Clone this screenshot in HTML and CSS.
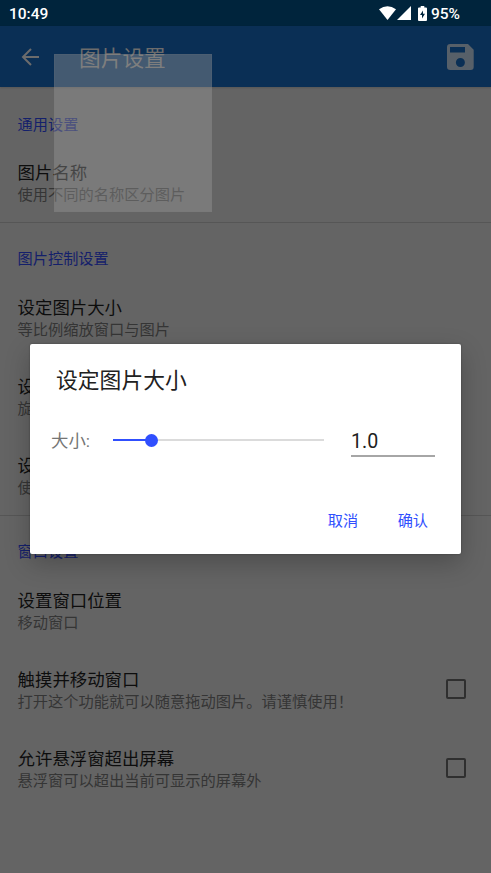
FILE: index.html
```html
<!DOCTYPE html>
<html lang="zh-CN">
<head>
<meta charset="utf-8">
<title>图片设置</title>
<link rel="stylesheet" href="styles.css">
</head>
<body>
<header class="status">
  <span>10:49</span>
  <div class="status-icons">
    <svg width="17" height="15" viewBox="0 0 17 15"><path d="M0 3.3Q8.5-2.7 17 3.3L8.5 14Z"/></svg>
    <svg width="14" height="14" viewBox="0 0 14 14"><path d="M14 0V14H0Z"/></svg>
    <svg class="battery" width="9" height="15" viewBox="0 0 9 15"><path fill-rule="evenodd" d="M2.7 0H6.3V1.5H8Q9 1.5 9 2.5V14Q9 15 8 15H1Q0 15 0 14V2.5Q0 1.5 1 1.5H2.7ZM5 4.5L2 9H4V12.5L7 7.8H5Z"/></svg>
    <span>95%</span>
  </div>
</header>
<nav class="bar">
  <svg class="back" width="18" height="18" viewBox="0 0 18 18"><path d="M18 9H2M10 1L2 9L10 17"/></svg>
  <h1>图片设置</h1>
  <svg class="save" width="28" height="28" viewBox="0 0 28 28"><path fill-rule="evenodd" d="M4.2 1H22L27.7 6.7V24Q27.7 27 24.7 27H4.2Q1 27 1 24V4Q1 1 4.2 1ZM4 4V9.6H19V4ZM14.4 15A4.5 4.5 0 1 0 14.4 24A4.5 4.5 0 1 0 14.4 15Z"/></svg>
</nav>
<main>
  <section>
    <h2>通用设置</h2>
    <div class="row"><div><h3>图片名称</h3><p>使用不同的名称区分图片</p></div></div>
  </section>
  <section>
    <h2>图片控制设置</h2>
    <div class="row"><div><h3>设定图片大小</h3><p>等比例缩放窗口与图片</p></div></div>
    <div class="row"><div><h3>设定</h3><p>旋转</p></div></div>
    <div class="row"><div><h3>设定</h3><p>使用</p></div></div>
  </section>
  <section>
    <h2>窗口设置</h2>
    <div class="row"><div><h3>设置窗口位置</h3><p>移动窗口</p></div></div>
    <div class="row"><div><h3>触摸并移动窗口</h3><p>打开这个功能就可以随意拖动图片。请谨慎使用！</p></div><i class="check"></i></div>
    <div class="row"><div><h3>允许悬浮窗超出屏幕</h3><p>悬浮窗可以超出当前可显示的屏幕外</p></div><i class="check"></i></div>
  </section>
</main>
<div class="floating"></div>
<div class="dialog">
  <h2 class="dialog-title">设定图片大小</h2>
  <div class="control">
    <span class="label">大小:</span>
    <div class="slider"><div class="fill"></div><div class="thumb"></div></div>
    <div class="value">1.0</div>
  </div>
  <div class="actions"><span>取消</span><span>确认</span></div>
</div>
</body>
</html>
```
FILE: styles.css
```css
* { box-sizing: border-box; }
body {
  margin: 0;
  width: 491px;
  height: 873px;
  overflow: hidden;
  position: relative;
  background: #646464;
  font-family: Roboto, "Noto Sans CJK SC", sans-serif;
  font-weight: 400;
}
h1, h2, h3, p { margin: 0; font-weight: 400; white-space: nowrap; }
svg { display: block; }
.status {
  height: 26px;
  padding: 2px 31px 0 9px;
  display: flex;
  align-items: center;
  justify-content: space-between;
  background: #00243c;
  color: #fff;
  font-size: 15.5px;
  font-weight: 500;
}
.status-icons { display: flex; align-items: center; gap: 1px; }
.status-icons svg { fill: #fff; margin-top: -2px; }
.status-icons .battery { margin-left: 6px; margin-right: 3px; }
.bar {
  height: 61px;
  padding: 0 17px 0 21px;
  display: flex;
  align-items: center;
  background: #0a2f55;
  box-shadow: 0 1px 2px rgba(0, 0, 0, .15);
}
.back { fill: none; stroke: #6c6c6c; stroke-width: 2; }
.bar h1 { flex: 1; margin-left: 40px; padding-top: 4px; font-size: 21.7px; line-height: 30px; color: #6c6c6c; }
.save { fill: #576069; }
section { border-bottom: 1px solid #565656; }
section:last-child { border: 0; }
section h2 {
  height: 56.3px;
  padding: 26px 0 0 17.6px;
  font-size: 15.2px;
  line-height: 22px;
  color: #14206b;
}
section:first-child h2 { padding-top: 27px; }
section:nth-child(2) h2, section:last-child h2 { padding-top: 25px; }
section:last-child h2 { height: 55.5px; }
.row {
  height: 78.6px;
  padding: 0 25px 0 17.6px;
  display: flex;
  align-items: center;
  justify-content: space-between;
}
section:last-child .row { height: 79px; }
.row h3 { font-size: 17.4px; line-height: 24px; color: #0d0d0d; }
.row p { font-size: 15.25px; line-height: 20px; color: #353535; }
.check { width: 20px; height: 20px; margin-top: -1px; border: 2px solid #2f2f2f; border-radius: 2px; }
.floating {
  position: absolute;
  left: 54px;
  top: 54px;
  width: 158px;
  height: 158px;
  background: rgba(155, 155, 155, .4);
  border: 1px solid rgba(120, 120, 120, .15);
}
.dialog {
  position: absolute;
  left: 29.5px;
  top: 344px;
  width: 431.5px;
  height: 210px;
  padding: 20.5px 26px 0 26.5px;
  background: #fff;
  border-radius: 2px;
  box-shadow: 0 9px 26px rgba(0, 0, 0, .24), 0 0 2px rgba(0, 0, 0, .35);
}
.dialog-title { font-size: 21.8px; line-height: 32px; color: #212121; }
.control { display: flex; align-items: center; height: 40px; margin: 23.5px 0 0 -4px; }
.label { width: 61px; margin-left: -1px; margin-right: 1px; padding-bottom: 2px; font-size: 17.4px; color: #757575; }
.slider { width: 211px; height: 13px; display: flex; align-items: center; position: relative; }
.slider::before { content: ""; position: absolute; width: 100%; height: 2px; background: #dbdbdb; }
.fill { width: 38px; height: 2px; background: #304ffe; position: relative; }
.thumb { width: 13px; height: 13px; margin-left: -6px; border-radius: 50%; background: #304ffe; position: relative; }
.value {
  width: 84px;
  height: 33px;
  margin-left: 27px;
  border-bottom: 2px solid #a6a6a6;
  font-size: 19.6px;
  line-height: 35px;
  color: #212121;
}
.actions { display: flex; justify-content: flex-end; gap: 39.5px; margin: 50px 7px 0 0; font-size: 15.2px; line-height: 22px; color: #304ffe; }
```
